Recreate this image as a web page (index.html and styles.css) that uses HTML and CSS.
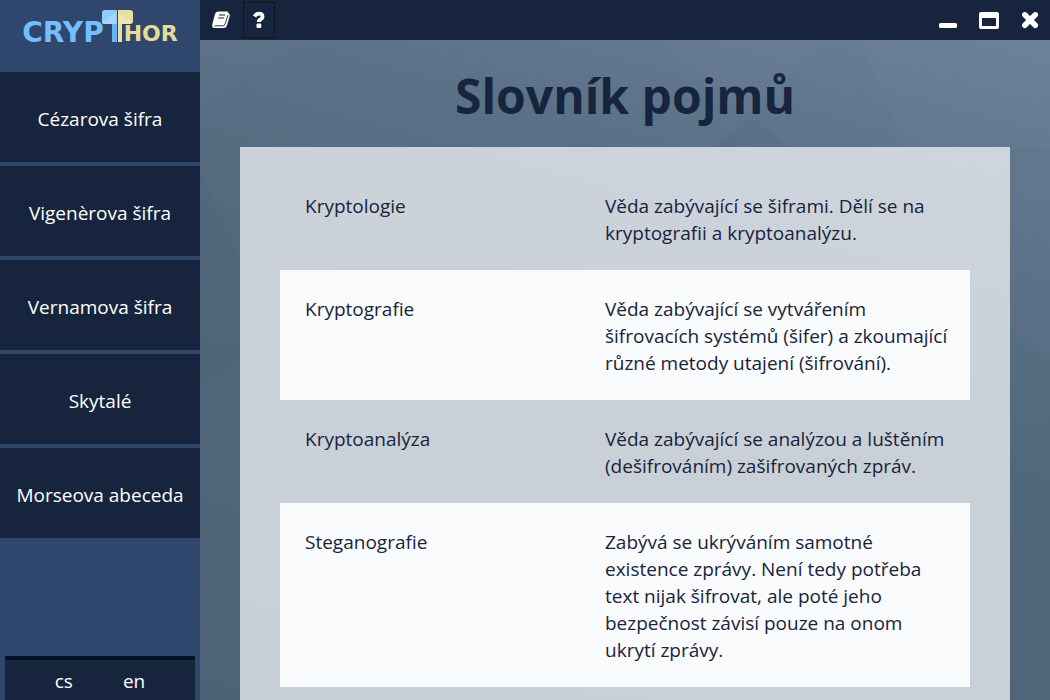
FILE: index.html
```html
<!DOCTYPE html>
<html lang="cs">
<head>
<meta charset="utf-8">
<title>Crypthor</title>
<link rel="stylesheet" href="styles.css">
</head>
<body>
<div class="app">
  <aside class="sidebar">
    <div class="logo">
      <span class="logo-cryp">CRYP</span>
      <svg class="logo-hammer" viewBox="0 0 32 34" role="img" aria-label="T">
        <path d="M3 0H15V32H10V14H3Q0 14 0 11V3Q0 0 3 0Z" fill="#8fcbff"/>
        <path d="M10 14H15V32H10Z" fill="#65b5f3"/>
        <path d="M0 12L14 2V14H3Q0 14 0 12Z" fill="#a5d6ff"/>
        <path d="M16 0H28Q31 0 31 3V11Q31 14 28 14H20V32H16Z" fill="#e8dfa0"/>
        <path d="M17 3L30 12Q29 14 27 14H17Z" fill="#eee7b4"/>
      </svg>
      <span class="logo-hor">HOR</span>
    </div>
    <nav class="menu">
      <button class="menu-item" type="button">Cézarova šifra</button>
      <button class="menu-item" type="button">Vigenèrova šifra</button>
      <button class="menu-item" type="button">Vernamova šifra</button>
      <button class="menu-item" type="button">Skytalé</button>
      <button class="menu-item" type="button">Morseova abeceda</button>
    </nav>
    <div class="languages">
      <button class="language" type="button">cs</button>
      <button class="language" type="button">en</button>
    </div>
  </aside>
  <div class="window">
    <header class="titlebar">
      <button class="tool" type="button" aria-label="Slovník">
        <svg viewBox="0 0 18 18" width="18" height="18"><path d="M6 0.500H15Q16.500 0.500 16.300 2Q18.300 3 17.700 5L15 14.500Q14.300 17 11.500 17H3Q-0.500 17 0.300 13.500L3 3Q3.700 0.500 6 0.500Z" fill="#fff"/><path d="M2.500 14.800H11Q12.700 14.800 13.200 12.800L16 4" fill="none" stroke="#17243d" stroke-width=".9"/><path d="M7 4H13M6.200 7H12.200" stroke="#17243d" stroke-width="1.200"/></svg>
      </button>
      <button class="tool focused" type="button" aria-label="Nápověda">
        <svg viewBox="0 0 14 18" width="14" height="18"><path d="M2.500 5.500Q4 2.700 7 2.700Q10.500 2.700 10.500 5.500Q10.500 7.300 8.300 8.500Q6.700 9.400 6.700 11" fill="none" stroke="#fff" stroke-width="3.800"/><rect x="4.500" y="12.500" width="4.800" height="4.500" rx="1" fill="#fff"/></svg>
      </button>
      <div class="window-controls">
        <button class="control" type="button" aria-label="Minimalizovat">
          <svg viewBox="0 0 20 20" width="20" height="20"><rect x="1" y="13" width="18" height="5" rx="1.500" fill="#fff"/></svg>
        </button>
        <button class="control" type="button" aria-label="Maximalizovat">
          <svg viewBox="0 0 20 20" width="20" height="20"><path d="M2 2H18Q20 2 20 4V17Q20 19 18 19H2Q0 19 0 17V4Q0 2 2 2ZM3 8V16H17V8Z" fill="#fff" fill-rule="evenodd"/></svg>
        </button>
        <button class="control" type="button" aria-label="Zavřít">
          <svg viewBox="0 0 20 20" width="20" height="20"><path d="M4.800 4.800L15.300 15.300M15.300 4.800L4.800 15.300" stroke="#fff" stroke-width="5.500" stroke-linecap="round"/></svg>
        </button>
      </div>
    </header>
    <main class="content">
      <svg class="backdrop" viewBox="0 0 850 660" preserveAspectRatio="none" aria-hidden="true">
        <path d="M0 0H110L0 65Z" fill="#fff" opacity=".02"/>
        <path d="M460 0L540 75L580 45L625 0Z" fill="#fff" opacity=".02"/>
        <path d="M552 78L515 107H588Z" fill="#102030" opacity=".04"/>
        <path d="M660 0L705 107H850V0Z" fill="#fff" opacity=".02"/>
        <path d="M810 135L850 130V320L810 290Z" fill="#fff" opacity=".02"/>
        <path d="M0 130L40 220V320L0 345Z" fill="#102030" opacity=".02"/>
      </svg>
      <h1 class="title">Slovník pojmů</h1>
      <section class="card">
        <table class="glossary">
          <tbody>
            <tr><th scope="row">Kryptologie</th><td>Věda zabývající se šiframi. Dělí se na kryptografii a kryptoanalýzu.</td></tr>
            <tr><th scope="row">Kryptografie</th><td>Věda zabývající se vytvářením šifrovacích systémů (šifer) a zkoumající různé metody utajení (šifrování).</td></tr>
            <tr><th scope="row">Kryptoanalýza</th><td>Věda zabývající se analýzou a luštěním (dešifrováním) zašifrovaných zpráv.</td></tr>
            <tr><th scope="row">Steganografie</th><td>Zabývá se ukrýváním samotné existence zprávy. Není tedy potřeba text nijak šifrovat, ale poté jeho bezpečnost závisí pouze na onom ukrytí zprávy.</td></tr>
          </tbody>
        </table>
      </section>
    </main>
  </div>
</div>
</body>
</html>
```
FILE: styles.css
```css
* { box-sizing: border-box; }

body {
  margin: 0;
  font-family: "Segoe UI", "Open Sans", "Noto Sans", sans-serif;
  font-size: 19px;
  line-height: 27px;
  color: #17243d;
}

button {
  margin: 0;
  padding: 0;
  border: 0;
  background: none;
  color: #fff;
  font: inherit;
}

svg { display: block; }

.app { display: flex; height: 100vh; }

.sidebar {
  display: flex;
  flex-direction: column;
  flex: 0 0 200px;
  background: #2f476d;
}

.logo {
  display: flex;
  justify-content: center;
  align-items: flex-end;
  height: 72px;
  padding-bottom: 28px;
  font-family: "DejaVu Sans", sans-serif;
  font-weight: 700;
}

.logo-cryp { font-size: 28px; line-height: 22px; color: #73bffd; }
.logo-hor { font-size: 22px; line-height: 20px; color: #e6dc95; }
.logo-hammer { width: 32px; height: 34px; margin: 0 -10px 0 -2px; }

.menu { display: flex; flex-direction: column; gap: 4px; }
.menu-item { height: 90px; padding-top: 4px; background: #17243d; }

.languages {
  display: flex;
  justify-content: center;
  gap: 50px;
  height: 44px;
  margin: auto 5px 0;
  padding-top: 2px;
  border-top: 4px solid #001324;
  background: #17243d;
}

.window { display: flex; flex: 1; flex-direction: column; min-width: 0; }

.titlebar {
  display: flex;
  align-items: center;
  gap: 8px;
  height: 40px;
  padding: 0 10px 0 6px;
  background: #17243d;
}

.tool, .control { display: grid; place-items: center; }
.tool { width: 30px; height: 34px; }
.focused { outline: 1px dotted #000; }
.window-controls { display: flex; gap: 21px; margin-left: auto; }

.content {
  position: relative;
  flex: 1;
  min-height: 0;
  padding: 22px 40px 0;
  overflow: hidden auto;
  scrollbar-width: none;
  background: linear-gradient(195deg, #6a8096 0%, #5a7086 25%, #51677b 50%, #4d6276 100%);
}

.backdrop { position: absolute; inset: 0; width: 100%; height: 100%; }

.title {
  position: relative;
  margin: 0 0 17px;
  font-size: 48px;
  line-height: 68px;
  text-align: center;
}

.card { position: relative; padding: 20px 40px; background: rgb(250 250 252 / 72%); }

.glossary { width: 100%; border-collapse: collapse; table-layout: fixed; }
.glossary th { width: 300px; font-weight: 400; text-align: left; }
.glossary th, .glossary td { padding: 26px 0 23px 25px; vertical-align: top; }
.glossary td { padding-right: 20px; }
.glossary tr:nth-child(even) { background: #fafbfc; }
```
